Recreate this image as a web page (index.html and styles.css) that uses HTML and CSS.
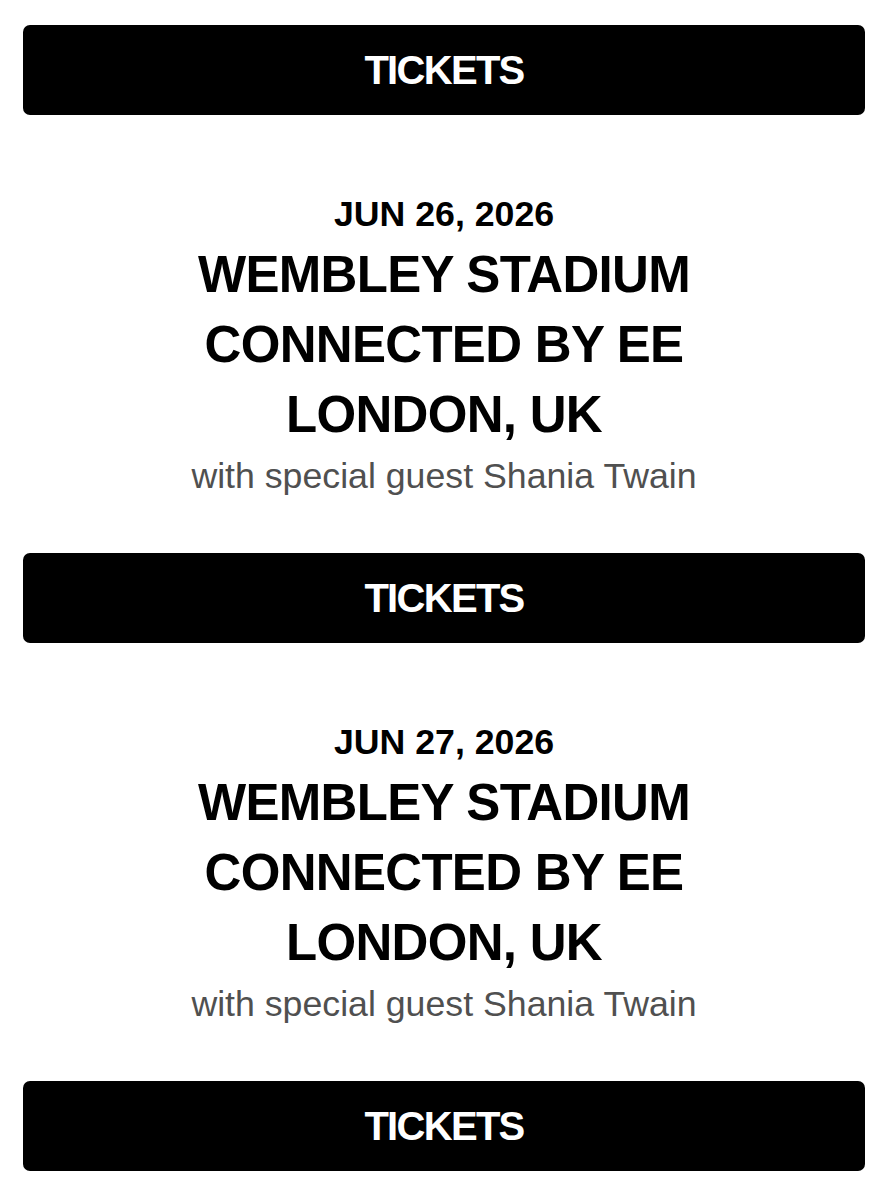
FILE: index.html
```html
<!DOCTYPE html>
<html lang="en">
<head>
<meta charset="utf-8">
<title>Tour dates</title>
<link rel="stylesheet" href="styles.css">
</head>
<body>
<main class="page">
  <a class="btn" href="#">TICKETS</a>
  <section class="show">
    <div class="date">JUN 26, 2026</div>
    <h2 class="venue">WEMBLEY STADIUM<br>CONNECTED BY EE<br>LONDON, UK</h2>
    <p class="guest">with special guest Shania Twain</p>
  </section>
  <a class="btn" href="#">TICKETS</a>
  <section class="show">
    <div class="date">JUN 27, 2026</div>
    <h2 class="venue">WEMBLEY STADIUM<br>CONNECTED BY EE<br>LONDON, UK</h2>
    <p class="guest">with special guest Shania Twain</p>
  </section>
  <a class="btn" href="#">TICKETS</a>
</main>
</body>
</html>
```
FILE: styles.css
```css
html, body {
  margin: 0;
  padding: 0;
  background: #fff;
}
body {
  font-family: "Liberation Sans", Arial, Helvetica, sans-serif;
  color: #000;
}
.page {
  padding: 25px 23px 0;
  display: flex;
  flex-direction: column;
}
.btn {
  display: flex;
  align-items: center;
  justify-content: center;
  height: 90px;
  background: #000;
  color: #fff;
  border-radius: 7px;
  text-decoration: none;
  font-weight: 700;
  font-size: 40px;
  letter-spacing: -1.7px;
}
.show {
  text-align: center;
  padding: 79px 0 56px;
}
.date {
  font-weight: 700;
  font-size: 35.7px;
  line-height: 40px;
  letter-spacing: 0;
}
.venue {
  margin: 6px 0 0;
  font-weight: 700;
  font-size: 51px;
  line-height: 70px;
  letter-spacing: -0.7px;
}
.guest {
  margin: 5px 0 0;
  font-weight: 400;
  font-size: 35.7px;
  line-height: 42px;
  color: #505050;
}
```
